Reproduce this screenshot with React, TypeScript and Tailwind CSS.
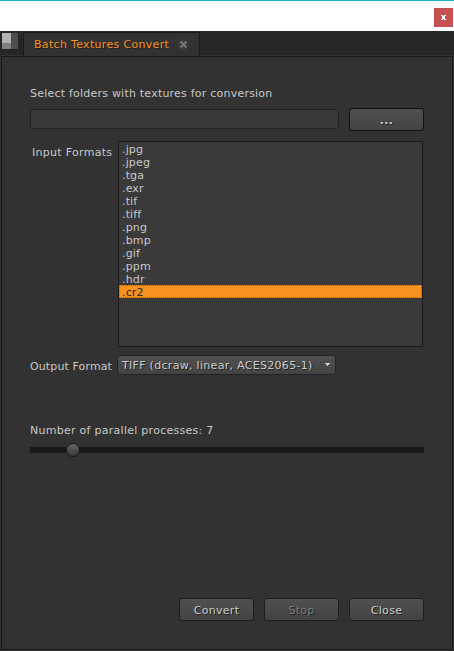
import type { ReactNode } from "react";

const formats = [".jpg", ".jpeg", ".tga", ".exr", ".tif", ".tiff", ".png", ".bmp", ".gif", ".ppm", ".hdr", ".cr2"];

function PushButton({ children, disabled, dark }: { children: ReactNode; disabled?: boolean; dark?: boolean }) {
  return (
    <button
      disabled={disabled}
      className={`flex h-[23px] w-[75px] shrink-0 items-center justify-center rounded-[3px] border bg-linear-to-b from-[#505050] to-[#434343] pt-px leading-[13px] tracking-[0.3px] [text-shadow:1px_1px_0_#202020] ${
        dark ? "border-[#111111] font-bold" : "border-[#1d1d1d]"
      } ${disabled ? "text-[#7b7b7b]" : "text-[#cccccc]"}`}
    >
      {children}
    </button>
  );
}

export default function App() {
  return (
    <div className="flex h-[651px] w-[454px] flex-col overflow-hidden bg-[#323232] font-['DejaVu_Sans',Verdana,sans-serif] text-[11px] leading-[13px] whitespace-nowrap text-[#c8c8c8]">
      <header className="flex h-[31px] shrink-0 justify-end border-t border-[#19b5c3] bg-white pt-[7px] pr-px">
        <button className="flex size-[19px] items-center justify-center bg-[#c75050]" aria-label="Close window">
          <svg width="5" height="5" viewBox="0 0 5 5" shapeRendering="crispEdges" fill="white">
            <path d="M0 0h2v1H0zM3 0h2v1H3zM1 1h3v1H1zM1 2h3v1H1zM1 3h3v1H1zM0 4h2v1H0zM3 4h2v1H3z" />
          </svg>
        </button>
      </header>

      <nav className="flex h-[25px] shrink-0 border-b border-[#323232] bg-[#262626]">
        <div className="flex w-[23px] shrink-0 pt-[2px] pl-[2px]">
          <svg width="16" height="16" viewBox="0 0 16 16" shapeRendering="crispEdges">
            <rect width="9" height="10" fill="#b2b2b2" />
            <rect y="10" width="9" height="6" fill="#808080" />
            <rect x="9" width="7" height="16" fill="#4d4d4d" />
          </svg>
        </div>
        <div className="mt-px flex h-[24px] w-[177px] items-center rounded-t-[2px] border-x border-t border-[#191919] bg-[#323232] pl-[10px] text-[#f7931e]">
          <span className="w-[139px] tracking-[0.32px] [text-shadow:1px_1px_0_#202020]">Batch Textures Convert</span>
          <svg className="ml-[5px] -mt-px" width="11" height="11" viewBox="0 0 11 11">
            <circle cx="5.5" cy="5.5" r="5.5" fill="#3a3a3a" />
            <path d="M2.5 2.5l6 6M8.5 2.5l-6 6" stroke="#777777" strokeWidth="2" />
          </svg>
        </div>
      </nav>

      <main className="mr-px ml-px flex h-[594px] shrink-0 flex-col border border-[#191919] pr-[28px] pl-[28px]">
        <p className="mt-[30px] h-[13px] tracking-[0.22px]">Select folders with textures for conversion</p>
        <div className="mt-[8px] flex h-[23px] items-start justify-between">
          <input className="mt-px h-[20px] w-[309px] rounded-[3px] border border-[#222222] bg-[#393939]" aria-label="Folders" />
          <PushButton dark>...</PushButton>
        </div>

        <div className="mt-[10px] flex h-[206px]">
          <label className="mt-[5px] w-[88px] shrink-0 pl-[2px] tracking-[0.3px]">Input Formats</label>
          <ul className="h-[206px] w-[305px] border border-[#191919] bg-[#3a3a3a]">
            {formats.map((format) => (
              <li
                key={format}
                className={`h-[13px] leading-[13px] tracking-[0.15px] ${
                  format === ".cr2"
                    ? "border border-dotted border-[#2a78cc] bg-[#f7931e] pl-[2px] leading-[11px] text-[#282828]"
                    : "pl-[3px] pt-px"
                }`}
              >
                {format}
              </li>
            ))}
          </ul>
        </div>

        <div className="mt-[8px] flex h-[20px]">
          <label className="mt-[5px] w-[87px] shrink-0 tracking-[0.12px]">Output Format</label>
          <button className="flex h-[20px] w-[219px] items-center justify-between rounded-[3px] border border-[#222222] bg-linear-to-b from-[#505050] to-[#434343] pt-px pr-[5px] pl-[4px] text-[#cccccc] [text-shadow:1px_1px_0_#202020]">
            <span className="tracking-[0.3px]">TIFF (dcraw, linear, ACES2065-1)</span>
            <svg className="-mt-[3px]" width="5" height="3" viewBox="0 0 5 3" shapeRendering="crispEdges" fill="#cccccc">
              <path d="M0 0h5v1H0zM1 1h3v1H1zM2 2h1v1H2z" />
            </svg>
          </button>
        </div>

        <p className="mt-[49px] h-[13px] tracking-[0.27px]">Number of parallel processes: 7</p>
        <div className="mt-[6px] flex h-[14px] items-center">
          <div className="h-[6px] w-[36px] bg-[#191919]" />
          <div className="-mr-px size-[14px] shrink-0 rounded-full border border-[#141414] bg-linear-to-b from-[#666666] to-[#383838]" />
          <div className="h-[6px] grow bg-[#191919]" />
        </div>

        <footer className="mt-[141px] flex justify-end gap-[10px]">
          <PushButton>Convert</PushButton>
          <PushButton disabled>Stop</PushButton>
          <PushButton>Close</PushButton>
        </footer>
      </main>
    </div>
  );
}
